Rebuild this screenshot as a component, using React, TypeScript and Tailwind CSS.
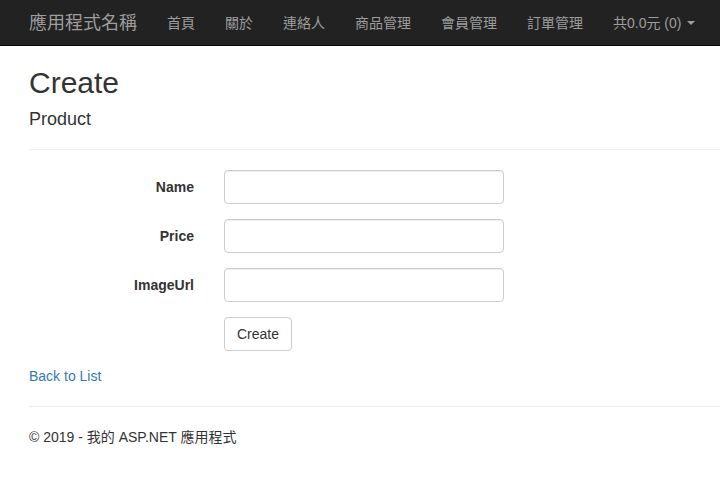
import React from "react";

const font = { fontFamily: '"Liberation Sans", Arial, "Noto Sans CJK TC", sans-serif' };

function Field({ label }: { label: string }) {
  return (
    <div className="flex items-center mb-[15px]">
      <label className="w-[165px] text-right text-[14px] font-bold text-[#333] leading-[20px]">{label}</label>
      <input
        type="text"
        className="ml-[30px] w-[280px] h-[34px] px-[12px] py-[6px] text-[14px] bg-white border border-[#ccc] rounded-[4px] shadow-[inset_0_1px_1px_rgba(0,0,0,0.075)] outline-none"
      />
    </div>
  );
}

export default function App() {
  const navItems = ["首頁", "關於", "連絡人", "商品管理", "會員管理", "訂單管理"];
  return (
    <div className="w-[720px] min-h-[496px] bg-white text-[#333] text-[14px] leading-[20px] overflow-hidden" style={font}>
      <nav className="h-[46px] bg-[#222] border-b border-[#080808] flex items-center pl-[29px] whitespace-nowrap">
        <span className="text-[18px] text-[#9d9d9d] pr-[15px] leading-[20px]">應用程式名稱</span>
        {navItems.map((n) => (
          <span key={n} className="px-[15px] text-[14px] text-[#9d9d9d] leading-[20px]">{n}</span>
        ))}
        <span className="px-[15px] text-[14px] text-[#9d9d9d] leading-[20px] flex items-center">
          共0.0元 (0)
          <span className="ml-[6px] inline-block w-0 h-0 border-t-[4px] border-t-[#9d9d9d] border-x-[4px] border-x-transparent" />
        </span>
      </nav>
      <div className="pl-[29px]">
        <h2 className="mt-[20px] mb-[10px] text-[30px] leading-[33px] font-normal">Create</h2>
        <h4 className="text-[18px] leading-[20px] font-normal">Product</h4>
        <hr className="mt-[20px] mb-[20px] border-t border-[#eee]" />
        <Field label="Name" />
        <Field label="Price" />
        <Field label="ImageUrl" />
        <div className="mb-[15px] pl-[195px]">
          <button className="h-[34px] px-[12px] text-[14px] text-[#333] bg-white border border-[#ccc] rounded-[4px]">Create</button>
        </div>
        <div className="leading-[20px]">
          <a className="text-[#337ab7]">Back to List</a>
        </div>
        <hr className="mt-[20px] mb-[20px] border-t border-[#eee]" />
        <p className="leading-[20px]">© 2019 - 我的 ASP.NET 應用程式</p>
      </div>
    </div>
  );
}
